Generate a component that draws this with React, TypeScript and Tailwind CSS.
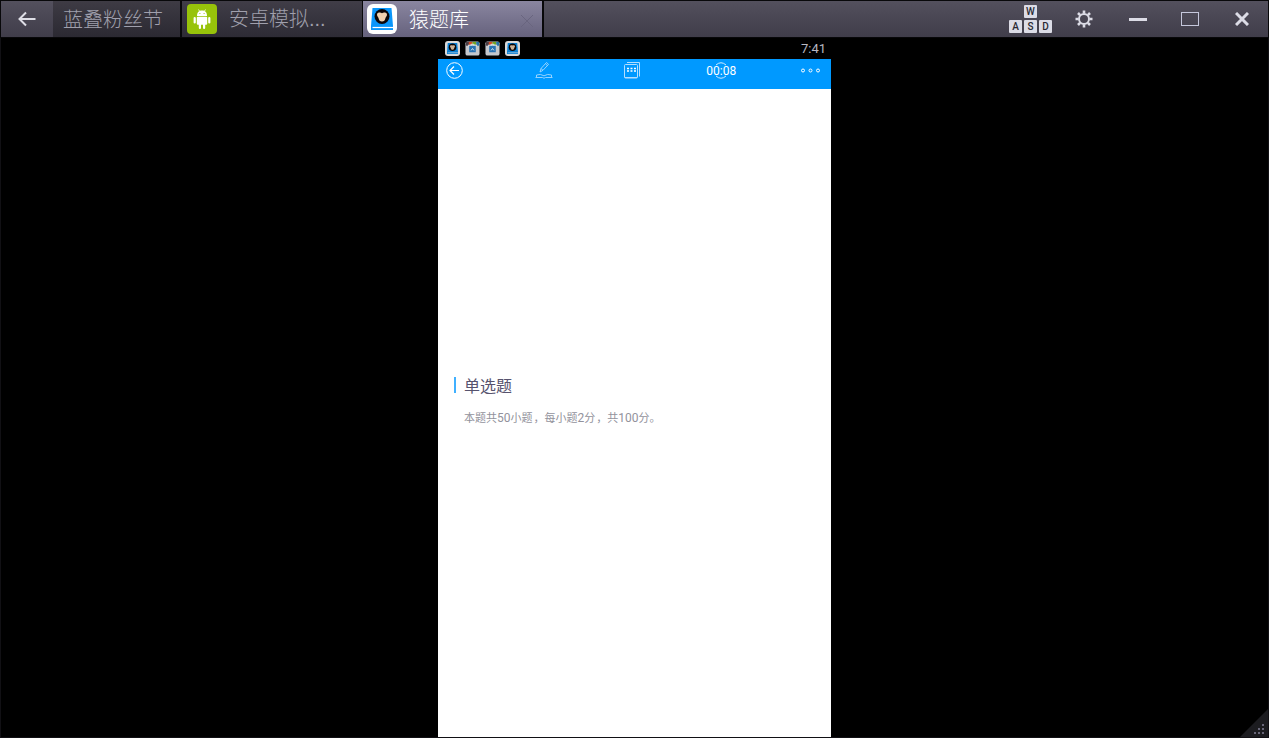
import React from 'react';

const cjk = "font-['Noto_Sans_CJK_SC',sans-serif]";

function ApeLogo({ className }: { className: string }) {
  return (
    <svg viewBox="0 0 30 30" className={className} aria-hidden="true">
      <rect width="30" height="30" rx="6" fill="#fff" />
      <path d="M5.500 4h19l1.500 18v4H4v-4z" fill="#0a96fa" />
      <path d="M5.500 23.500H26" stroke="#fff" strokeWidth="1.200" />
      <circle cx="15" cy="12.500" r="7.500" fill="#0c0708" />
      <path d="M10 10.500C10 8.500 13.500 8 15 9.200C16.500 8 20 8.500 20 10.500C20 12.500 18.800 12.800 18.500 14C18 16.500 17 17.500 15 17.500S12 16.500 11.500 14C11.200 12.800 10 12.500 10 10.500z" fill="#efd0ae" />
    </svg>
  );
}

function AndroidLogo() {
  return (
    <svg viewBox="0 0 30 30" className="size-[30px] shrink-0" aria-hidden="true">
      <rect width="30" height="30" rx="4" fill="#97c30a" />
      <g fill="#fff" stroke="#fff">
        <path d="M10 12c0-3.800 2-5.500 5-5.500s5 1.700 5 5.500z" stroke="none" />
        <path d="M11.500 5.500l1.300 2M18.500 5.500l-1.300 2" strokeWidth=".8" />
        <rect x="9.800" y="12.800" width="10.400" height="8" rx="1" stroke="none" />
        <path d="M7.700 14v4.500M22.300 14v4.500M12.900 20v4M17.100 20v4" strokeWidth="2.200" strokeLinecap="round" />
      </g>
      <circle cx="12.900" cy="9.500" r=".6" fill="#97c30a" />
      <circle cx="17.100" cy="9.500" r=".6" fill="#97c30a" />
    </svg>
  );
}

function StoreLogo() {
  return (
    <svg viewBox="0 0 16 16" className="size-[15px]" aria-hidden="true">
      <rect x=".5" y=".5" width="15" height="15" rx="2" fill="#c4c7cc" />
      <path d="M1 1h4v4H1z" fill="#473c45" />
      <path d="M4 1h4v3H4z" fill="#d14a24" />
      <path d="M8 1h4v3H8z" fill="#71a522" />
      <path d="M12 1h3v4h-3z" fill="#2370a8" />
      <path d="M3 4h10l-1 2H4z" fill="#e4e1dc" />
      <path d="M4.500 5h7v7h-7z" fill="#2872b4" />
      <path d="M6.500 5V3.500h3V5M6.500 10l1.500-2l1.500 2" fill="none" stroke="#dce7ef" />
    </svg>
  );
}

function Key({ children }: { children: string }) {
  return (
    <span className="flex size-[13px] items-center justify-center rounded-[1px] bg-[#dcdce6] font-['Roboto',sans-serif] text-[10px] leading-3 font-medium text-[#292933]">
      {children}
    </span>
  );
}

function TitleBar() {
  return (
    <header className="flex h-[38px] shrink-0 border border-[#08080a] bg-linear-to-b from-[#53505d] to-[#403d4a]">
      <button aria-label="返回" className="flex w-[52px] shrink-0 items-center justify-center">
        <svg viewBox="0 0 18 16" className="h-4 w-[18px]" fill="none" stroke="#dedee6" strokeWidth="2">
          <path d="M17.500 8H2M8 1.500L1.500 8L8 14.500" />
        </svg>
      </button>
      <nav className={`flex text-xl font-light ${cjk}`}>
        <button className="flex w-[129px] items-center border-r-2 border-[#08080a] bg-linear-to-b from-[#3e3b44] to-[#2b2932] pl-[10px] text-[#a0a0ad]">
          <span className="pb-px">蓝叠粉丝节</span>
        </button>
        <button className="flex w-[181px] items-center gap-3 border-r border-[#08080a] bg-linear-to-b from-[#403d47] to-[#2d2b35] pl-[5px] text-[#a0a0ad]">
          <AndroidLogo />
          <span className="pb-px">安卓模拟<span className="font-['Liberation_Sans',sans-serif]">...</span></span>
        </button>
        <button className="flex w-[181px] items-center gap-3 border-r-2 border-[#08080a] bg-linear-to-b from-[#8a86a0] to-[#66627d] pl-1 text-white">
          <ApeLogo className="size-[30px] shrink-0" />
          <span className="flex-1 pb-px text-left">猿题库</span>
          <svg viewBox="0 0 14 14" className="mt-1 mr-2 size-[14px]" stroke="#69657f" aria-hidden="true">
            <path d="M1 1l12 12M13 1L1 13" />
          </svg>
        </button>
      </nav>
      <div className="ml-auto flex items-center">
        <button aria-label="键盘控制" className="mr-[23px] flex flex-col items-center gap-[2px]">
          <Key>W</Key>
          <span className="flex gap-[2px]">
            <Key>A</Key>
            <Key>S</Key>
            <Key>D</Key>
          </span>
        </button>
        <button aria-label="设置" className="mr-[36px]">
          <svg viewBox="0 0 18 18" className="size-[18px]" fill="none" stroke="#dcdce6">
            <circle cx="9" cy="9" r="5" strokeWidth="2" />
            <path d="M9 .5v3M9 14.500v3M.5 9h3M14.500 9h3M3 3l2.100 2.100M12.900 12.900L15 15M15 3l-2.100 2.100M5.100 12.900L3 15" strokeWidth="2.600" />
          </svg>
        </button>
        <button aria-label="最小化" className="mr-[34px]">
          <svg viewBox="0 0 18 14" className="h-[14px] w-[18px]"><path d="M0 7.500h18" stroke="#dcdce6" strokeWidth="3" /></svg>
        </button>
        <button aria-label="最大化" className="mr-[36px]">
          <svg viewBox="0 0 18 14" className="h-[14px] w-[18px]" fill="none"><rect x=".5" y=".5" width="17" height="13" stroke="#c5c7dc" /></svg>
        </button>
        <button aria-label="关闭" className="mr-[19px]">
          <svg viewBox="0 0 14 14" className="size-[14px]" stroke="#dcdce6" strokeWidth="3"><path d="M1 1l12 12M13 1L1 13" /></svg>
        </button>
      </div>
    </header>
  );
}

function Toolbar() {
  return (
    <div className="flex h-[30px] shrink-0 items-start justify-between bg-[#0099ff] pt-[3px] pr-[11px] pl-[7px] text-white">
      <button aria-label="返回" className="flex w-5 justify-center">
        <svg viewBox="0 0 18 18" className="size-[18px]" fill="none" stroke="currentColor">
          <circle cx="8.500" cy="8.500" r="7.800" />
          <path d="M13 8.500H4.500M8 4.500l-4 4l4 4" strokeWidth="1.200" />
        </svg>
      </button>
      <button aria-label="草稿" className="flex w-5 justify-center">
        <svg viewBox="0 0 18 18" className="size-[18px]" fill="none" stroke="#a5d8ff" strokeWidth=".9">
          <path d="M5 10l1-3.500l5.500-6l2 1.800l-5.500 6zM6 6.500l2 1.800M10.500 1.800l2 1.800" />
          <path d="M.5 15.500h7q1.500 1.500 3 0h7M1.500 15v-2q4-1.500 7.500.8q3.500-2.300 7.500-.8v2" />
        </svg>
      </button>
      <button aria-label="答题卡" className="flex w-5 justify-center">
        <svg viewBox="0 0 18 18" className="size-[18px]" fill="none" stroke="#b4deff">
          <rect x=".5" y="2.500" width="13" height="13.500" rx="1" />
          <path d="M3 .5h12.500v14M1 15.500h12" />
          <path d="M3 6.500h2M6.500 6.500h2M10 6.500h2M3 9h2M6.500 9h2M10 9h2" stroke="#fff" strokeWidth="1.500" />
        </svg>
      </button>
      <button aria-label="计时" className="grid w-5 place-items-center justify-center">
        <svg viewBox="0 0 18 18" className="col-start-1 row-start-1 size-[18px]" fill="none" stroke="#d0ebff">
          <path d="M4 3Q9-1.500 14 3M4 14Q9 18.500 14 14" />
        </svg>
        <span className="col-start-1 row-start-1 font-['Roboto',sans-serif] text-xs leading-4">00:08</span>
      </button>
      <button aria-label="更多" className="flex w-5 justify-center">
        <svg viewBox="0 0 20 18" className="h-[18px] w-5" fill="none" stroke="currentColor">
          <circle cx="3" cy="8.500" r="1.500" />
          <circle cx="10.500" cy="8.500" r="1.500" />
          <circle cx="18" cy="8.500" r="1.500" />
        </svg>
      </button>
    </div>
  );
}

function Comma() {
  return <span className="pl-px">，</span>;
}

function Digits({ children }: { children: string }) {
  return <span className="font-['Roboto',sans-serif] text-xs leading-4">{children}</span>;
}

export default function App() {
  return (
    <div className="flex min-h-screen flex-col bg-black">
      <TitleBar />
      <div className="relative flex flex-1 justify-center border-x border-b border-[#111014]">
        <div className="flex w-[393px] flex-col">
          <div className="flex h-[21px] shrink-0 items-center justify-between pr-[5px] pl-[7px]">
            <div className="flex gap-[5px]">
              <ApeLogo className="size-[15px] opacity-85" />
              <StoreLogo />
              <StoreLogo />
              <ApeLogo className="size-[15px] opacity-85" />
            </div>
            <span className="font-['Roboto',sans-serif] text-[13px] leading-4 text-[#b8b8c2]">7:41</span>
          </div>
          <Toolbar />
          <main className={`flex flex-1 flex-col justify-center bg-white pb-7 pl-4 ${cjk}`}>
            <div className="flex items-center gap-2">
              <span className="h-4 w-[2px] bg-[#40b0ff]" />
              <h1 className="text-base leading-6 text-[#57536e]">单选题</h1>
            </div>
            <p className="mt-3 pl-[10px] text-[11px] leading-4 text-[#92929c]">
              本题共<Digits>50</Digits>小题<Comma />每小题<Digits>2</Digits>分<Comma />共<Digits>100</Digits>分。
            </p>
          </main>
        </div>
        <svg viewBox="0 0 28 28" className="absolute right-0 bottom-0 size-7" aria-hidden="true">
          <path d="M28 0v28H0z" fill="#1c1c20" />
          <path d="M22 15h2v2h-2zM18 19h2v2h-2zM22 19h2v2h-2zM14 23h2v2h-2zM18 23h2v2h-2zM22 23h2v2h-2z" fill="#696779" />
        </svg>
      </div>
    </div>
  );
}
